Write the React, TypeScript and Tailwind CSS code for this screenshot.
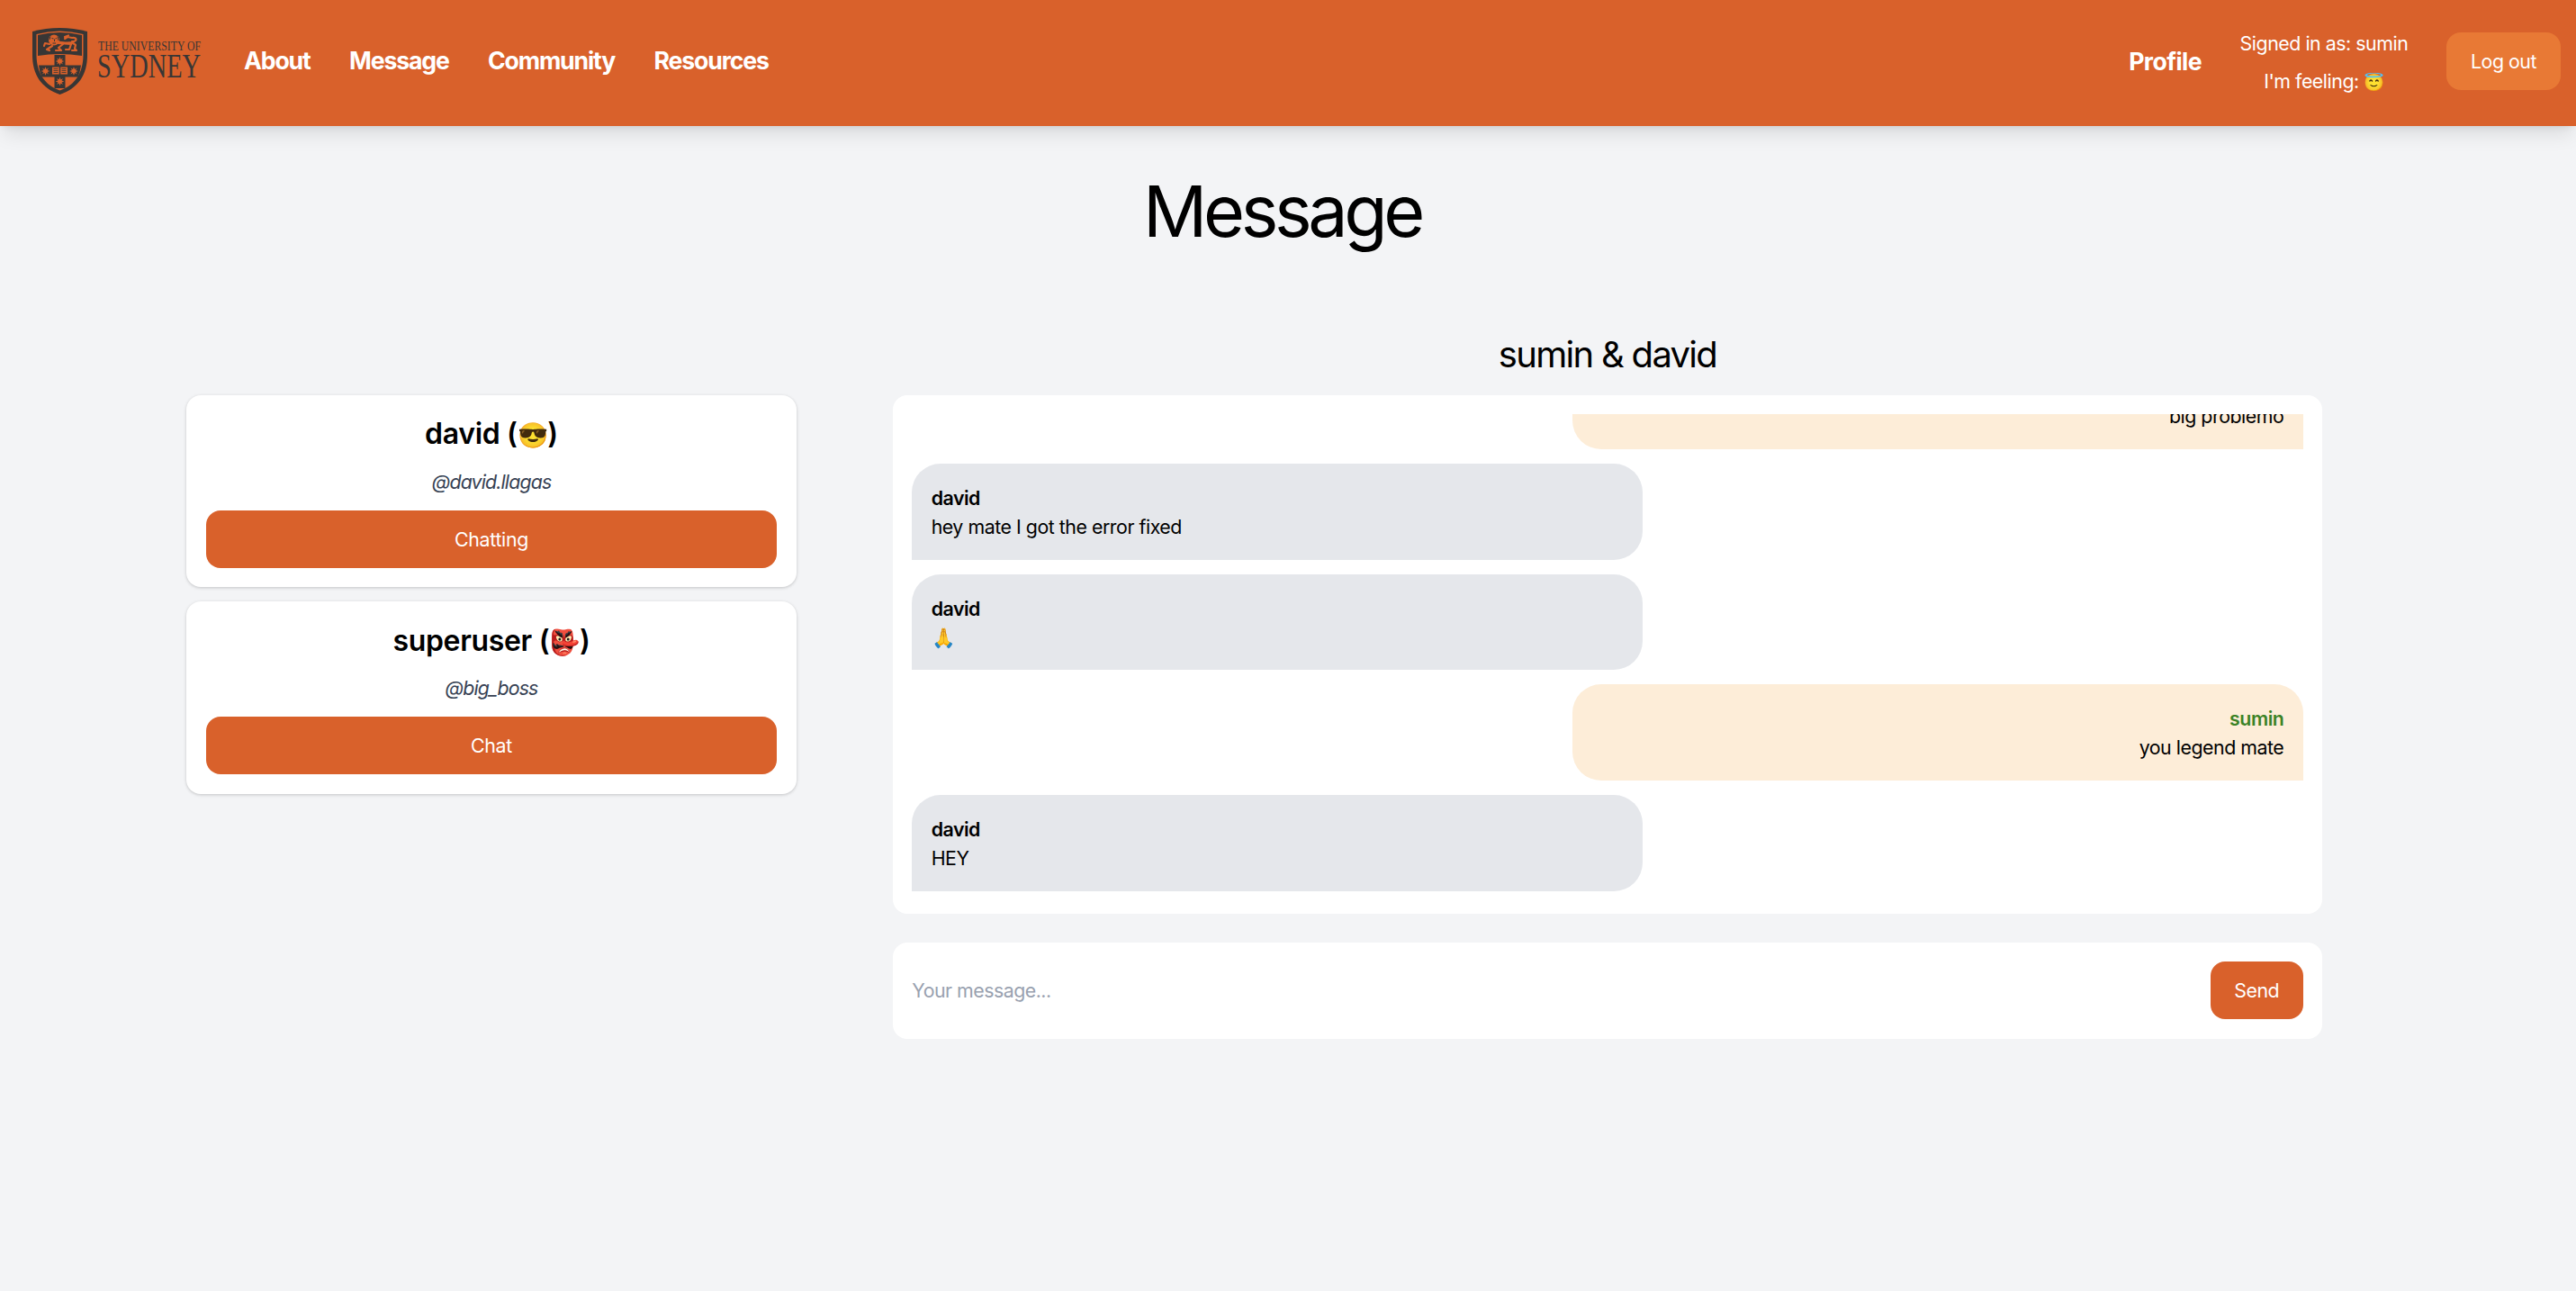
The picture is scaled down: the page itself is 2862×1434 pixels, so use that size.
import React from "react";

const star = "M0-4 L.9-1.7 2.9-2.9 1.7-.9 4 0 1.7.9 2.9 2.9 .9 1.7 0 4-.9 1.7-2.9 2.9-1.7.9-4 0-1.7-.9-2.9-2.9-.9-1.7Z";

function Shield() {
  return (
    <svg width="62" height="75" viewBox="0 0 62 75" className="shrink-0">
      <path fill="#383635" d="M0 4Q30-4 61 4V30C61 52 51 67 30.500 74C10 67 0 52 0 30Z" />
      <path fill="#d9612b" d="M4.500 7Q30 0 56.500 7V30C56.500 50 47 64 30.500 69.500C14 64 4.500 50 4.500 30Z" />
      <path fill="#383635" d="M6 8Q30 2 55 8V31Q30 27 6 31Z" />
      <path fill="#383635" d="M24.500 30H36.500V41.500H54Q53 49 50.500 54.500H36.500V67H24.500V54.500H10.500Q8 49 7 41.500H24.500Z" />
      <g fill="none" stroke="#d9612b" strokeWidth="2.200" strokeLinecap="round" strokeLinejoin="round">
        <path d="M27 15L36 17 44 16 48 19 47 23 49 25H44M43 18L41 24H37M34 18L29 22 32 25H26M22 20L16 24 19 25M19 18L14 17 13 20M44 15C50 15 50 10 44 11L39 10 36 12M40 8.500L36 10" />
        <path strokeWidth="3.200" d="M29 16.500L43 17.500" />
      </g>
      <circle cx="24" cy="13.500" r="6" fill="#d9612b" />
      <path d="M21.500 11.500L23.500 12M25.500 12L27 11.500M24.500 12.500V15M22.500 17H26M20 9.500L19 13M28 9.500L29 14" stroke="#383635" strokeWidth="1" />
      <g fill="#d9612b">
        <path transform="translate(30.500 37) scale(1.2)" d={star} />
        <path transform="translate(30.500 59.500) scale(1.2)" d={star} />
        <path transform="translate(14.500 48) scale(1.2)" d={star} />
        <path transform="translate(46 48) scale(1.2)" d={star} />
        <path d="M22 43.500H29.800V51.500H22ZM31.200 43.500H39V51.500H31.200Z" />
      </g>
      <path d="M23.500 45.500H28.500M23.500 47.500H28.500M23.500 49.500H28.500M32.500 45.500H37.500M32.500 47.500H37.500M32.500 49.500H37.500" stroke="#383635" strokeWidth=".8" />
    </svg>
  );
}

function Logo() {
  return (
    <a className="flex h-[75px] items-start">
      <Shield />
      <svg width="116" height="75" viewBox="0 0 116 75" className="ml-[10px] overflow-visible tracking-normal" fill="#383635" fontFamily="Liberation Serif, serif">
        <text x="1" y="25" fontSize="14.500" textLength="114" lengthAdjust="spacingAndGlyphs">THE UNIVERSITY OF</text>
        <text x="0" y="55" fontSize="37" textLength="115" lengthAdjust="spacingAndGlyphs">SYDNEY</text>
      </svg>
    </a>
  );
}

function ContactCard({ name, emoji, handle, action }: { name: string; emoji: string; handle: string; action: string }) {
  return (
    <div className="flex h-[213.330px] flex-col rounded-[16px] bg-white px-[22px] pt-[21.330px] text-center shadow-[0_1px_4px_rgba(0,0,0,0.1),0_1px_3px_rgba(0,0,0,0.1)]">
      <h2 className="h-[42.670px] text-[32px] leading-[43.500px] font-semibold tracking-[-0.35px]">
        {name} (<span className="text-[27.500px] leading-none">{emoji}</span>)
      </h2>
      <p className="mt-[16px] tracking-[-0.85px] text-gray-700 italic">{handle}</p>
      <button className="mt-[16px] h-[64px] w-full rounded-[16px] bg-[#d9612b] tracking-[-0.3px] text-white">{action}</button>
    </div>
  );
}

function Bubble({ name, mine, children }: { name: string; mine?: boolean; children: React.ReactNode }) {
  return (
    <div
      className={
        mine
          ? "h-[106.670px] w-[812px] shrink-0 self-end rounded-[32px] rounded-br-none bg-[#fdedd8] px-[21.330px] pt-[22px] text-right"
          : "h-[106.670px] w-[812px] shrink-0 rounded-[32px] rounded-bl-none bg-gray-200 px-[21.330px] pt-[22px]"
      }
    >
      <p className={mine ? "font-semibold text-[#3b8225]" : "font-semibold"}>{name}</p>
      <p>{children}</p>
    </div>
  );
}

export default function App() {
  return (
    <div className="h-[1434px] overflow-hidden bg-gray-100 font-[Inter,sans-serif] text-[21.330px] leading-[32px] tracking-[-0.46px] text-black">
      <header className="flex h-[140px] items-start bg-[#d9612b] pr-[17px] pl-[36px] text-white shadow-[0_13px_20px_-4px_rgba(0,0,0,0.1),0_5px_8px_-5px_rgba(0,0,0,0.1)]">
        <div className="mt-[31px]">
          <Logo />
        </div>
        <nav className="mt-[49px] ml-[47px] flex gap-[43.300px] text-[26.670px] leading-[37px] font-bold tracking-[-1.150px]">
          <a>About</a>
          <a>Message</a>
          <a>Community</a>
          <a>Resources</a>
        </nav>
        <div className="ml-auto flex h-[136px] items-center gap-[42.670px]">
          <a className="text-[26.670px] leading-[37px] font-bold tracking-[-0.6px]">Profile</a>
          <div className="flex flex-col gap-[10px] pt-[2px] text-center">
            <p className="h-[32px]">Signed in as: sumin</p>
            <p className="h-[32px]">
              I'm feeling: <span className="text-[18.500px] leading-none">😇</span>
            </p>
          </div>
          <button className="h-[64px] w-[127px] rounded-[16px] bg-[#e87935]">Log out</button>
        </div>
      </header>

      <h1 className="mt-[54px] pr-[13px] text-center text-[79px] leading-[80px] tracking-[-4.400px]">Message</h1>

      <main className="mt-[93px] flex gap-[107px] pr-[282px] pl-[207px]">
        <section className="mt-[72px] flex w-[678px] flex-col gap-[16px]">
          <ContactCard name="david" emoji="😎" handle="@david.llagas" action="Chatting" />
          <ContactCard name="superuser" emoji="👺" handle="@big_boss" action="Chat" />
        </section>
        <section className="w-[1588px]">
          <h2 className="mt-[3px] mb-[21px] text-center text-[40px] leading-[48px] tracking-[-1.700px]">sumin &amp; david</h2>
          <div className="h-[576px] rounded-[16px] bg-white p-[21.330px]">
            <div className="flex h-full flex-col justify-end gap-[16px] overflow-hidden pb-[4px]">
              <Bubble name="sumin" mine>big problemo</Bubble>
              <Bubble name="david">hey mate I got the error fixed</Bubble>
              <Bubble name="david">🙏</Bubble>
              <Bubble name="sumin" mine>you legend mate</Bubble>
              <Bubble name="david">HEY</Bubble>
            </div>
          </div>
          <form className="mt-[32px] flex h-[106.670px] items-center rounded-[16px] bg-white px-[21.330px]">
            <input className="grow tracking-[-0.5px] outline-none placeholder:text-gray-400" placeholder="Your message..." />
            <button type="button" className="h-[64px] w-[103px] rounded-[16px] bg-[#d9612b] tracking-[-0.46px] text-white">Send</button>
          </form>
        </section>
      </main>
    </div>
  );
}
